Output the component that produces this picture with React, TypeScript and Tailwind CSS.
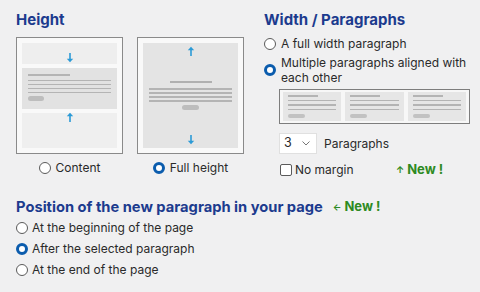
import React from 'react';

const FONT = { fontFamily: 'Inter, "Noto Sans", sans-serif' };

// petite flèche bleue des schémas
function Arrow({ up }: { up?: boolean }) {
  return (
    <svg width="8" height="10" viewBox="0 0 8 10" className="block">
      {up ? (
        <>
          <path d="M4 10V2" stroke="#2b9ad6" strokeWidth="1.6" />
          <path d="M0.8 4.2L4 0.8L7.2 4.2Z" fill="#2b9ad6" />
        </>
      ) : (
        <>
          <path d="M4 0V8" stroke="#2b9ad6" strokeWidth="1.6" />
          <path d="M0.8 5.8L4 9.2L7.2 5.8Z" fill="#2b9ad6" />
        </>
      )}
    </svg>
  );
}

function Radio({ checked }: { checked?: boolean }) {
  return checked ? (
    <span className="block w-3 h-3 shrink-0 rounded-full border-[3.5px] border-[#0b5cad] bg-white" />
  ) : (
    <span className="block w-3 h-3 shrink-0 rounded-full border border-[#5a5a5a] bg-white" />
  );
}

function NewTag({ arrow }: { arrow: string }) {
  return (
    <span className="flex items-center gap-[3px] text-[#2d8a22] font-bold text-[13px] whitespace-nowrap">
      <span className="text-[9px] font-bold">{arrow}</span>
      New !
    </span>
  );
}

function Lines() {
  return (
    <div className="flex flex-col gap-[2.5px]">
      <div className="h-[1.5px] bg-[#b4b4b4]" />
      <div className="h-[1.5px] bg-[#b4b4b4]" />
      <div className="h-[1.5px] bg-[#b4b4b4]" />
      <div className="h-[1.5px] bg-[#b4b4b4]" />
    </div>
  );
}

function ContentBox() {
  return (
    <div className="w-[107px] h-[117px] border border-[#8a8a8a] bg-[#f9f9f9] p-[5px] flex flex-col gap-[4px]">
      <div className="h-[21px] bg-[#eeeeee] flex justify-center items-end pb-[1px]">
        <Arrow />
      </div>
      <div className="h-[41px] bg-[#e2e2e2] px-[6px] pt-[6px]">
        <div className="w-[42px] h-[1.5px] bg-[#b4b4b4] mb-[4px]" />
        <Lines />
        <div className="w-[16px] h-[5px] rounded-full bg-[#bdbdbd] mt-[3px]" />
      </div>
      <div className="flex-1 bg-[#efefef] flex justify-center items-start">
        <div className="-mt-[1px]">
          <Arrow up />
        </div>
      </div>
    </div>
  );
}

function FullBox() {
  return (
    <div className="w-[107px] h-[117px] border border-[#8a8a8a] bg-[#f9f9f9] p-[5px]">
      <div className="h-full bg-[#e4e4e4] flex flex-col items-center justify-between py-[3px] px-[6px]">
        <Arrow up />
        <div className="w-full flex flex-col items-center">
          <div className="w-[42px] h-[2px] bg-[#b0b0b0] mb-[5px]" />
          <div className="w-full">
            <Lines />
          </div>
          <div className="w-[17px] h-[5px] rounded-full bg-[#bdbdbd] mt-[3px]" />
        </div>
        <Arrow />
      </div>
    </div>
  );
}

function MiniPara() {
  return (
    <div className="flex-1 bg-[#e6e6e6] px-[5px] pt-[3px]">
      <div className="w-[30px] h-[1.5px] bg-[#b4b4b4] mb-[3px]" />
      <div className="flex flex-col gap-[3px]">
        <div className="h-[1.5px] bg-[#b4b4b4]" />
        <div className="h-[1.5px] bg-[#b4b4b4]" />
        <div className="h-[1.5px] bg-[#b4b4b4]" />
      </div>
      <div className="w-[17px] h-[4px] rounded-full bg-[#c2c2c2] mt-[4px]" />
    </div>
  );
}

export default function App() {
  return (
    <div className="w-[480px] h-[292px] bg-[#f0f0f1] text-[#2a2a2a] overflow-hidden" style={FONT}>
      <div className="flex pl-4 pt-[10px]">
        {/* Hauteur */}
        <div className="w-[248px] shrink-0">
          <h2 className="text-[15px] leading-5 font-bold text-[#1c3b8e]">Height</h2>
          <div className="flex gap-[14px] mt-[7px]">
            <div className="flex flex-col items-center">
              <ContentBox />
              <label className="flex items-center gap-[5px] mt-[6px] text-[12px] leading-4">
                <Radio />
                Content
              </label>
            </div>
            <div className="flex flex-col items-center">
              <FullBox />
              <label className="flex items-center gap-[5px] mt-[6px] text-[12px] leading-4">
                <Radio checked />
                Full height
              </label>
            </div>
          </div>
        </div>

        {/* Largeur / paragraphes */}
        <div className="flex-1 pr-[10px]">
          <h2 className="text-[15px] leading-5 font-bold text-[#1c3b8e]">Width / Paragraphs</h2>
          <label className="flex items-center gap-[5px] mt-[6px] text-[12px] leading-4">
            <Radio />
            A full width paragraph
          </label>
          <label className="flex items-center gap-[5px] mt-[3px] text-[12px] leading-[15px] whitespace-nowrap">
            <Radio checked />
            <span>
              Multiple paragraphs aligned with
              <br />
              each other
            </span>
          </label>
          <div className="ml-[15px] mt-[4px] h-[35px] border border-[#7d7d7d] bg-[#f7f7f7] flex gap-[4px] p-[2px] px-[3px]">
            <MiniPara />
            <MiniPara />
            <MiniPara />
          </div>
          <div className="ml-[15px] mt-[9px] flex items-center gap-[7px]">
            <div className="w-[38px] h-[21px] bg-white border border-[#e0e0e0] flex items-center justify-between pl-[4px] pr-[6px] text-[12.5px]">
              3
              <svg width="8" height="5" viewBox="0 0 8 5">
                <path d="M0.5 0.5L4 4L7.5 0.5" fill="none" stroke="#777" strokeWidth="1" />
              </svg>
            </div>
            <span className="text-[12px]">Paragraphs</span>
          </div>
          <div className="ml-[16px] mt-[6px] flex items-center">
            <label className="flex items-center gap-[3px] text-[12px] leading-4 w-[116px]">
              <span className="block w-3 h-3 rounded-[2px] border border-[#5a5a5a] bg-white" />
              No margin
            </label>
            <NewTag arrow="↑" />
          </div>
        </div>
      </div>

      {/* Position */}
      <div className="pl-4 mt-[17px]">
        <div className="flex items-center gap-[10px]">
          <h2 className="text-[14.7px] leading-5 font-bold text-[#1c3b8e]">Position of the new paragraph in your page</h2>
          <NewTag arrow="←" />
        </div>
        <div className="flex flex-col gap-[5px] mt-[3px]">
          <label className="flex items-center gap-[4px] text-[12px] leading-4">
            <Radio />
            At the beginning of the page
          </label>
          <label className="flex items-center gap-[4px] text-[12px] leading-4">
            <Radio checked />
            After the selected paragraph
          </label>
          <label className="flex items-center gap-[4px] text-[12px] leading-4">
            <Radio />
            At the end of the page
          </label>
        </div>
      </div>
    </div>
  );
}
